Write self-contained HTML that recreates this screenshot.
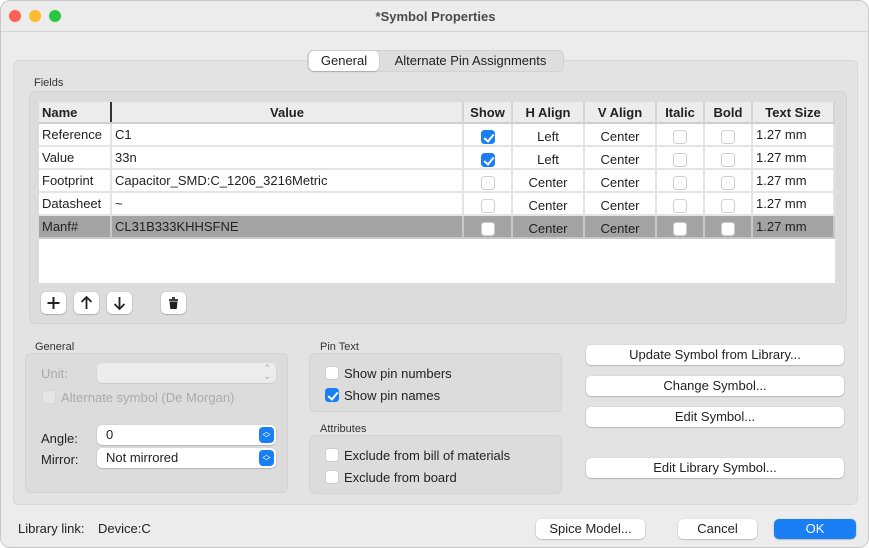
<!DOCTYPE html>
<html><head><meta charset="utf-8"><style>
*{box-sizing:border-box;margin:0;padding:0}
body{width:869px;height:548px;background:#fff;font-family:"Liberation Sans",sans-serif;font-size:13px;color:#222;overflow:hidden;position:relative}
.win{position:absolute;left:0;top:0;width:869px;height:548px;background:#ececec;border-radius:10px;border:1px solid #c8c8c8;overflow:hidden}
.a{position:absolute}
.title{left:0;top:0;width:869px;height:31px;border-bottom:1px solid #d4d4d4;text-align:center;line-height:31px;font-weight:bold;color:#4a4a4a;font-size:13px}
.dot{width:12px;height:12px;border-radius:50%;top:9px}
.panel{background:#e3e3e3;border:1px solid #d8d8d8;border-radius:6px}
.box{background:#dcdcdc;border:1px solid #d3d3d3;border-radius:6px}
.btn{background:#fff;border-radius:5px;box-shadow:0 0.5px 1.5px rgba(0,0,0,.35);text-align:center;font-size:13px;line-height:20px;height:20px}
table{border-collapse:collapse;font-size:13px}
td,th{height:23px;border-right:2px solid #e4e4e4;border-bottom:2px solid #e4e4e4;padding:0 3px;white-space:nowrap}
th{background:#ececec;font-weight:bold;text-align:center;height:21px;border-bottom:2px solid #cfcfcf;border-right:2px solid #d4d4d4}
td.c{text-align:center;padding-top:3px}
tr.sel td{background:#a3a3a3;border-color:#c8c8c8}
.cb{display:inline-block;width:14px;height:14px;border-radius:3.5px;border:1px solid #cfcfcf;background:#fff;vertical-align:middle}
.cb.on{background:#1a7ef5;border-color:#1a7ef5;position:relative}
.cb.on::after{content:"";position:absolute;left:4px;top:1px;width:4px;height:8px;border:solid #fff;border-width:0 2px 2px 0;transform:rotate(40deg)}
.row{display:flex;align-items:center;gap:5px;height:16px}
.row .cb{vertical-align:baseline}
.lbl{font-size:11px;color:#333}
.sel2{background:#fff;border-radius:5px;box-shadow:0 0.5px 1.5px rgba(0,0,0,.3);height:20px;line-height:20px;padding-left:9px}
.arr{position:absolute;right:2px;top:2px;width:15px;height:16px;border-radius:4px;background:#1a7ef5;color:#fff;font-size:8px;line-height:7px;text-align:center;padding-top:1px}
.ib{width:25px;height:22px;background:#fff;border-radius:5px;box-shadow:0 0.5px 1.5px rgba(0,0,0,.35);text-align:center}
</style></head><body>
<div class="win">
<div class="a title">*Symbol Properties</div>
<div class="a dot" style="left:8px;background:#fe5f57"></div>
<div class="a dot" style="left:28px;background:#febc2e"></div>
<div class="a dot" style="left:48px;background:#28c840"></div>

<div class="a panel" style="left:12px;top:59px;width:845px;height:445px"></div>
<div class="a" style="left:306px;top:49px;width:257px;height:22px;background:#dedede;border-radius:6px;border:1px solid #d2d2d2"></div>
<div class="a" style="left:308px;top:50px;width:70px;height:20px;background:#fff;border-radius:5px;box-shadow:0 0.5px 1.5px rgba(0,0,0,.3);text-align:center;line-height:20px">General</div>
<div class="a" style="left:382px;top:50px;width:175px;line-height:20px;text-align:center">Alternate Pin Assignments</div>

<div class="a lbl" style="left:33px;top:76px">Fields</div>
<div class="a box" style="left:28px;top:90px;width:818px;height:233px"></div>
<div class="a" style="left:38px;top:101px;width:796px;height:181px;background:#fff"></div>
<table class="a" style="left:38px;top:101px;width:796px">
<tr><th style="width:72px;text-align:left;border-right:2px solid #333">Name</th><th style="width:352px">Value</th><th style="width:49px">Show</th><th style="width:72px">H Align</th><th style="width:72px">V Align</th><th style="width:48px">Italic</th><th style="width:48px">Bold</th><th style="text-align:center">Text Size</th></tr>
<tr><td>Reference</td><td>C1</td><td class="c"><span class="cb on"></span></td><td class="c">Left</td><td class="c">Center</td><td class="c"><span class="cb"></span></td><td class="c"><span class="cb"></span></td><td>1.27 mm</td></tr>
<tr><td>Value</td><td>33n</td><td class="c"><span class="cb on"></span></td><td class="c">Left</td><td class="c">Center</td><td class="c"><span class="cb"></span></td><td class="c"><span class="cb"></span></td><td>1.27 mm</td></tr>
<tr><td>Footprint</td><td>Capacitor_SMD:C_1206_3216Metric</td><td class="c"><span class="cb"></span></td><td class="c">Center</td><td class="c">Center</td><td class="c"><span class="cb"></span></td><td class="c"><span class="cb"></span></td><td>1.27 mm</td></tr>
<tr><td>Datasheet</td><td>~</td><td class="c"><span class="cb"></span></td><td class="c">Center</td><td class="c">Center</td><td class="c"><span class="cb"></span></td><td class="c"><span class="cb"></span></td><td>1.27 mm</td></tr>
<tr class="sel"><td>Manf#</td><td>CL31B333KHHSFNE</td><td class="c"><span class="cb"></span></td><td class="c">Center</td><td class="c">Center</td><td class="c"><span class="cb"></span></td><td class="c"><span class="cb"></span></td><td>1.27 mm</td></tr>
</table>

<div class="a ib" style="left:40px;top:291px"><svg width="25" height="22"><path d="M12.5 5v12M6.5 11h12" stroke="#222" stroke-width="2"/></svg></div>
<div class="a ib" style="left:73px;top:291px"><svg width="25" height="22"><path d="M12.5 17V5M7.5 10l5-5 5 5" stroke="#222" stroke-width="1.8" fill="none"/></svg></div>
<div class="a ib" style="left:106px;top:291px"><svg width="25" height="22"><path d="M12.5 5v12M7.5 12l5 5 5-5" stroke="#222" stroke-width="1.8" fill="none"/></svg></div>
<div class="a ib" style="left:160px;top:291px"><svg width="25" height="22"><path d="M8 8h9M11 6h3" stroke="#222" stroke-width="1.8"/><path d="M8.5 9.5h8l-.8 7.5h-6.4z" fill="#222"/></svg></div>

<div class="a lbl" style="left:34px;top:340px">General</div>
<div class="a box" style="left:24px;top:352px;width:263px;height:140px"></div>
<div class="a" style="left:40px;top:365px;color:#aaa">Unit:</div>
<div class="a" style="left:96px;top:362px;width:179px;height:20px;background:#ececec;border-radius:5px;box-shadow:0 0.5px 1px rgba(0,0,0,.15)"><span style="position:absolute;right:5px;top:1px;color:#aaa;font-size:9px;line-height:8px">⌃<br>⌄</span></div>
<div class="a row" style="left:41px;top:388px"><span class="cb" style="background:#e6e6e6;border-color:#d8d8d8"></span><span style="color:#aaa">Alternate symbol (De Morgan)</span></div>
<div class="a" style="left:40px;top:430px">Angle:</div>
<div class="a sel2" style="left:96px;top:424px;width:179px">0<div class="arr">︿<br>﹀</div></div>
<div class="a" style="left:40px;top:451px">Mirror:</div>
<div class="a sel2" style="left:96px;top:447px;width:179px">Not mirrored<div class="arr">︿<br>﹀</div></div>

<div class="a lbl" style="left:319px;top:340px">Pin Text</div>
<div class="a box" style="left:308px;top:352px;width:253px;height:59px"></div>
<div class="a row" style="left:324px;top:364px"><span class="cb"></span><span>Show pin numbers</span></div>
<div class="a row" style="left:324px;top:386px"><span class="cb on"></span><span>Show pin names</span></div>
<div class="a lbl" style="left:319px;top:422px">Attributes</div>
<div class="a box" style="left:308px;top:434px;width:253px;height:59px"></div>
<div class="a row" style="left:324px;top:446px"><span class="cb"></span><span>Exclude from bill of materials</span></div>
<div class="a row" style="left:324px;top:468px"><span class="cb"></span><span>Exclude from board</span></div>

<div class="a btn" style="left:585px;top:344px;width:258px">Update Symbol from Library...</div>
<div class="a btn" style="left:585px;top:375px;width:258px">Change Symbol...</div>
<div class="a btn" style="left:585px;top:406px;width:258px">Edit Symbol...</div>
<div class="a btn" style="left:585px;top:457px;width:258px">Edit Library Symbol...</div>

<div class="a" style="left:17px;top:520px">Library link:</div>
<div class="a" style="left:97px;top:520px">Device:C</div>
<div class="a btn" style="left:535px;top:518px;width:109px">Spice Model...</div>
<div class="a btn" style="left:677px;top:518px;width:79px">Cancel</div>
<div class="a btn" style="left:773px;top:518px;width:82px;background:#1a7ef5;color:#fff">OK</div>
</div>
</body></html>
